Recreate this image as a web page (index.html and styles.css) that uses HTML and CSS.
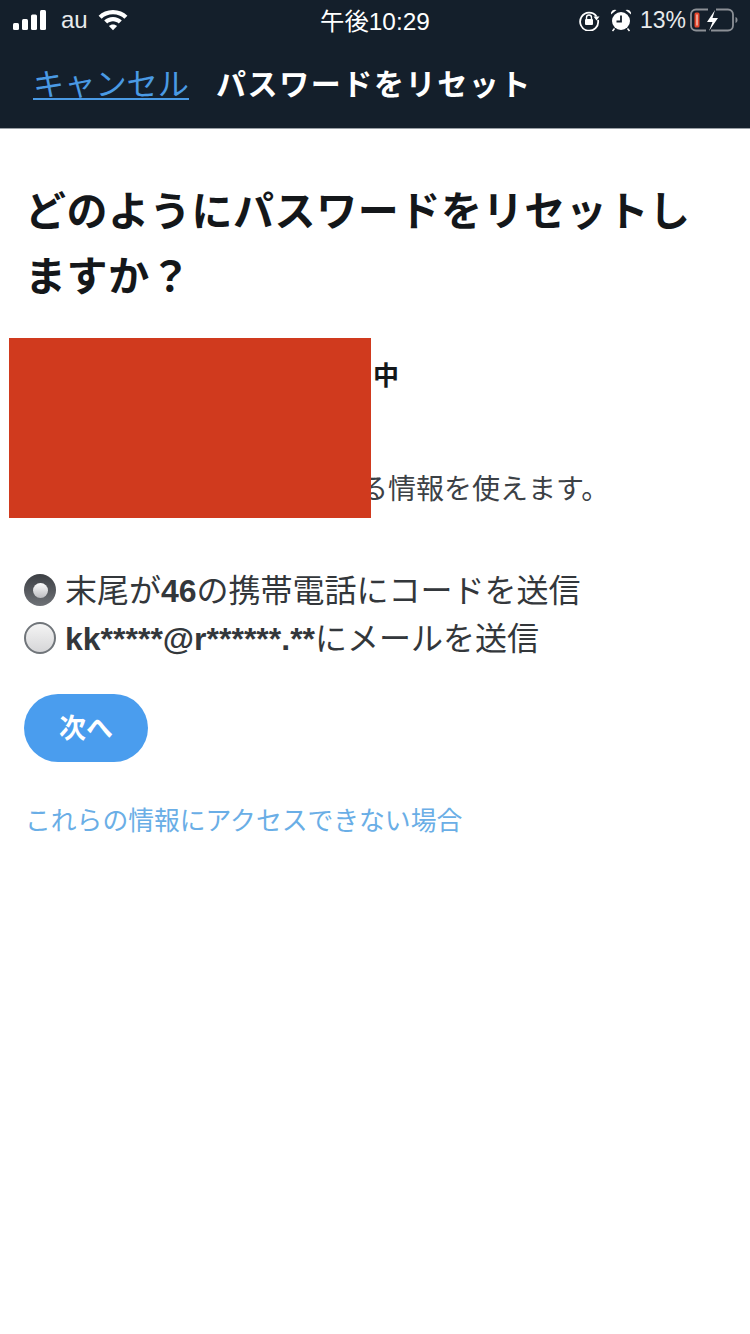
FILE: index.html
```html
<!DOCTYPE html>
<html lang="ja">
<head>
<meta charset="utf-8">
<title>パスワードをリセット</title>
<link rel="stylesheet" href="styles.css">
</head>
<body>
<header class="top">
  <div class="status">
    <div class="status-left">
      <svg class="signal" width="34" height="20" viewBox="0 0 34 20"><rect x="0" y="13" width="6" height="7" rx="1.5"/><rect x="9" y="9" width="6" height="11" rx="1.5"/><rect x="18" y="4.500" width="6" height="15.500" rx="1.500"/><rect x="27" y="0" width="6" height="20" rx="1.500"/></svg>
      <span class="carrier">au</span>
      <svg class="wifi" width="30" height="22" viewBox="0 0 30 22"><path d="M15 1C9.200 1 4.200 3.200.6 6.700l3 3.100C6.500 7 10.500 5.300 15 5.300s8.500 1.700 11.400 4.500l3-3.100C25.800 3.200 20.800 1 15 1z"/><path d="M15 8c-3.400 0-6.500 1.300-8.800 3.500l3 3.100c1.500-1.400 3.500-2.300 5.800-2.300s4.300.9 5.800 2.300l3-3.100C21.500 9.300 18.400 8 15 8z"/><path d="M15 15.400c-1.600 0-3 .6-4.100 1.600L15 21.300l4.100-4.300c-1.100-1-2.500-1.600-4.100-1.600z"/></svg>
    </div>
    <div class="time">午後10:29</div>
    <div class="status-right">
      <svg class="lock" width="22" height="22" viewBox="0 0 22 22"><path d="M18.500 7.500A9 9 0 1 0 20 11" fill="none" stroke="#fff" stroke-width="1.800"/><path d="M15.500 7.500h6l-3 4z" fill="#fff"/><rect x="7" y="10" width="8" height="6" rx="1" fill="#fff"/><path d="M8.500 10V8.500a2.500 2.500 0 0 1 5 0V10" fill="none" stroke="#fff" stroke-width="1.400"/></svg>
      <svg class="alarm" width="22" height="24" viewBox="0 0 22 24"><circle cx="11" cy="13" r="9" fill="#fff"/><path d="M11 7.500V13.500H6.500" fill="none" stroke="#141f2b" stroke-width="1.800"/><path d="M1 6.500a4 4 0 0 1 5.500-4.500zM21 6.500a4 4 0 0 0-5.500-4.500z" fill="#fff"/><path d="M4.500 20.500l-2 2.500M17.500 20.500l2 2.500" stroke="#fff" stroke-width="1.500"/></svg>
      <span class="percent">13%</span>
      <svg class="battery" width="48" height="24" viewBox="0 0 48 24"><path d="M16 22.500H6a5 5 0 0 1-5-5v-11a5 5 0 0 1 5-5h12M26 1.500h12a5 5 0 0 1 5 5v11a5 5 0 0 1-5 5H21" fill="none" stroke="#8c9096" stroke-width="1.800"/><path d="M45.500 9v6c1.300-.4 2-1.600 2-3s-.7-2.600-2-3z" fill="#8c9096"/><rect x="4.500" y="4.500" width="5" height="15" rx="1.500" fill="#e8472c"/><rect x="6.300" y="6.500" width="1.400" height="11" fill="#f3c6bc"/><path d="M25 2l-8 12h5.500L19 23l9-13h-5.500z" fill="#fff"/></svg>
    </div>
  </div>
  <nav class="nav">
    <a class="cancel" href="#">キャンセル</a>
    <h2 class="nav-title">パスワードをリセット</h2>
  </nav>
</header>
<main class="content">
  <h1 class="heading">どのようにパスワードをリセットしますか？</h1>
  <div class="account">
    <p class="account-name">中</p>
    <p class="account-note">る情報を使えます。</p>
    <div class="redaction"></div>
  </div>
  <form class="options">
    <label class="option"><span class="radio radio-on"></span><span class="option-text">末尾が<b>46</b>の携帯電話にコードを送信</span></label>
    <label class="option"><span class="radio"></span><span class="option-text"><b>kk*****@r******.**</b>にメールを送信</span></label>
  </form>
  <button class="next" type="button">次へ</button>
  <a class="help" href="#">これらの情報にアクセスできない場合</a>
</main>
</body>
</html>
```
FILE: styles.css
```css
* { box-sizing: border-box; }
html, body { margin: 0; padding: 0; background: #fff; }
body {
  width: 750px;
  height: 1334px;
  overflow: hidden;
  font-family: "Liberation Sans", "Noto Sans CJK JP", sans-serif;
  color: #14171a;
}
.top { background: #141f2b; height: 129px; border-bottom: 1px solid #9aa0a6; color: #fff; }
.status { height: 40px; display: flex; align-items: center; justify-content: space-between; position: relative; padding: 0 12px 0 13px; }
.status-left, .status-right { display: flex; align-items: center; }
.signal { fill: #fff; margin-right: 14px; }
.carrier { font-size: 24px; color: #e8eaec; margin-right: 10px; }
.wifi { fill: #fff; }
.time { font-size: 24.400px; position: absolute; left: 320px; top: 2px; }
.lock { margin-right: 10px; }
.alarm { margin-right: 8px; }
.percent { font-size: 23px; color: #e8eaec; margin-right: 4px; }
.nav { height: 88px; display: flex; align-items: center; padding: 0 0 0 33px; gap: 27px; }
.cancel { color: #4a9ae4; font-size: 31.200px; height: 32px; line-height: 34px; text-decoration: none; border-bottom: 2px solid #4a9ae4; }
.nav-title { margin: 0 0 4px; font-size: 30px; letter-spacing: 1.600px; font-weight: 700; color: #fff; }
.content { padding: 51px 24px 0; position: relative; }
.heading { margin: 0 0 0 1px; font-size: 41px; line-height: 65px; letter-spacing: .6px; font-weight: 700; color: #14171a; width: 680px; }
.account { position: relative; height: 180px; margin-top: 28px; }
.account-name { margin: 0; position: absolute; left: 349px; top: 20px; font-size: 26px; font-weight: 700; line-height: 36px; }
.account-note { margin: 0; position: absolute; left: 336px; top: 134px; font-size: 28px; line-height: 36px; color: #3c4146; }
.redaction { position: absolute; left: -15px; top: 0; width: 362px; height: 180px; background: #d03a1e; }
.options { margin-top: 48px; display: flex; flex-direction: column; }
.option { display: flex; align-items: center; gap: 9px; height: 48px; font-size: 32px; color: #33373b; }
.option-text { padding-bottom: 4px; }
.option b { font-weight: 700; }
.radio { width: 32px; height: 32px; border-radius: 50%; border: 2px solid #70757a; background: linear-gradient(#f4f4f4, #d6d6d8); flex: none; display: flex; align-items: center; justify-content: center; }
.radio-on { border: 0; background: linear-gradient(#3c3f44, #6e7176); }
.radio-on::after { content: ""; width: 15px; height: 15px; border-radius: 50%; background: linear-gradient(#fdfdfd, #bcbcc0); }
.next { display: block; margin-top: 32px; padding: 0 0 4px; width: 124px; height: 68px; border: 0; border-radius: 34px; background: #4a9dee; color: #fff; font: 700 27px "Liberation Sans", "Noto Sans CJK JP", sans-serif; }
.help { display: block; margin: 39px 0 0 1px; font-size: 25.800px; line-height: 40px; color: #6aaee6; text-decoration: none; }
```
